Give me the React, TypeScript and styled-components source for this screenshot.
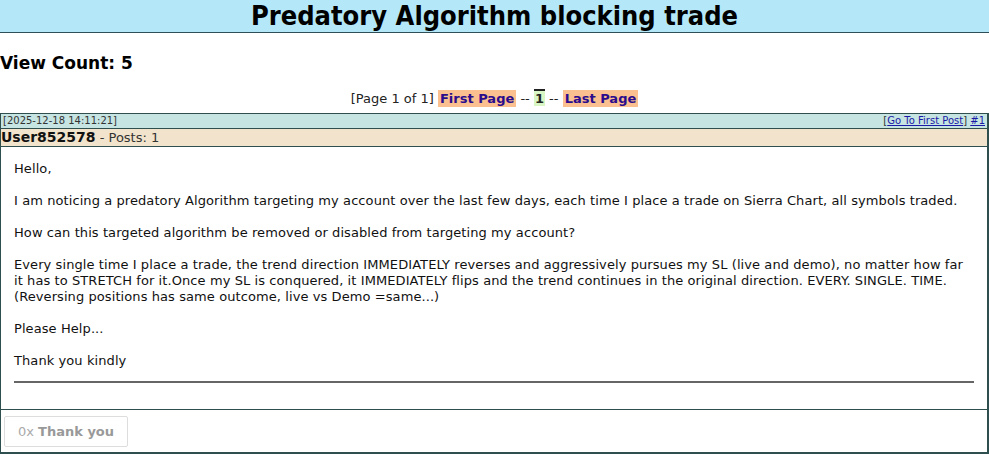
import React from "react";
import styled, { createGlobalStyle } from "styled-components";

const GlobalStyle = createGlobalStyle`
  html, body {
    margin: 0;
    padding: 0;
    background: #fff;
  }
  body {
    font-family: "DejaVu Sans", Verdana, sans-serif;
    color: #111;
  }
`;

const paragraphs = [
  "Hello,",
  "I am noticing a predatory Algorithm targeting my account over the last few days, each time I place a trade on Sierra Chart, all symbols traded.",
  "How can this targeted algorithm be removed or disabled from targeting my account?",
  "Every single time I place a trade, the trend direction IMMEDIATELY reverses and aggressively pursues my SL (live and demo), no matter how far it has to STRETCH for it.Once my SL is conquered, it IMMEDIATELY flips and the trend continues in the original direction. EVERY. SINGLE. TIME. (Reversing positions has same outcome, live vs Demo =same...)",
  "Please Help...",
  "Thank you kindly",
];

export default function App() {
  return (
    <>
      <GlobalStyle />
      <Page>
        <TitleBar>
          <h1>Predatory Algorithm blocking trade</h1>
        </TitleBar>
        <ViewCount>View Count: 5</ViewCount>
        <Pager>
          [Page 1 of 1] <PageLink href="#">First Page</PageLink> --{" "}
          <CurrentPage>1</CurrentPage> -- <PageLink href="#">Last Page</PageLink>
        </Pager>
        <Post>
          <DateRow>
            <span>[2025-12-18 14:11:21]</span>
            <span>
              [<a href="#">Go To First Post</a>] <a href="#">#1</a>
            </span>
          </DateRow>
          <UserRow>
            <b>User852578</b> - Posts: 1
          </UserRow>
          <Body>
            {paragraphs.map((p, i) => (
              <p key={i}>{p}</p>
            ))}
            <Rule />
          </Body>
          <Footer>
            <ThanksButton disabled>
              0x <b>Thank you</b>
            </ThanksButton>
          </Footer>
        </Post>
      </Page>
    </>
  );
}

const Page = styled.div`
  width: 989px;
`;

const TitleBar = styled.div`
  background: #b4e7f8;
  border-bottom: 1px solid #2f4f58;
  height: 32px;
  display: flex;
  align-items: center;
  justify-content: center;
  h1 {
    margin: 0;
    font-family: "DejaVu Sans Condensed", "DejaVu Sans", sans-serif;
    font-stretch: condensed;
    font-weight: bold;
    font-size: 27px;
    color: #000;
    line-height: 32px;
  }
`;

const ViewCount = styled.div`
  margin-top: 20px;
  font-weight: bold;
  font-size: 17px;
  line-height: 20px;
  color: #000;
`;

const Pager = styled.div`
  margin-top: 18px;
  text-align: center;
  font-size: 13px;
  line-height: 16px;
  color: #222;
`;

const PageLink = styled.a`
  background: #fbc08f;
  color: #2a0c8c;
  font-weight: bold;
  text-decoration: none;
  padding: 1px 2px;
`;

const CurrentPage = styled.span`
  background: #d9f6c5;
  border-top: 2px solid #222;
  font-weight: bold;
  color: #222;
  padding: 0 1px;
`;

const Post = styled.div`
  margin-top: 6px;
  border: 1px solid #2f4f4f;
  border-right-width: 2px;
  border-bottom-width: 2px;
`;

const DateRow = styled.div`
  display: flex;
  justify-content: space-between;
  background: #c6e4e2;
  border-bottom: 1px solid #2f4f4f;
  font-size: 10px;
  line-height: 14px;
  padding: 0 2px;
  color: #333;
  a {
    color: #1a1aa6;
  }
`;

const UserRow = styled.div`
  background: #f1e3cc;
  border-bottom: 1px solid #2f4f4f;
  font-size: 13px;
  line-height: 17px;
  color: #333;
  b {
    font-size: 14px;
    color: #111;
  }
`;

const Body = styled.div`
  padding: 6px 13px 0 13px;
  font-size: 13px;
  line-height: 16px;
  letter-spacing: 0.085px;
  color: #111;
  p {
    margin: 8px 0 16px;
  }
  p:last-of-type {
    margin-bottom: 12px;
  }
`;

const Rule = styled.hr`
  border: none;
  border-top: 2px solid #666;
  margin: 0 0 26px;
`;

const Footer = styled.div`
  border-top: 1px solid #2f4f4f;
  padding: 6px 3px 5px;
`;

const ThanksButton = styled.button`
  width: 124px;
  height: 31px;
  background: #fff;
  border: 1px solid #ddd;
  border-radius: 2px;
  color: #aaa;
  font-family: "DejaVu Sans", Verdana, sans-serif;
  font-size: 13px;
  b {
    color: #999;
  }
`;
